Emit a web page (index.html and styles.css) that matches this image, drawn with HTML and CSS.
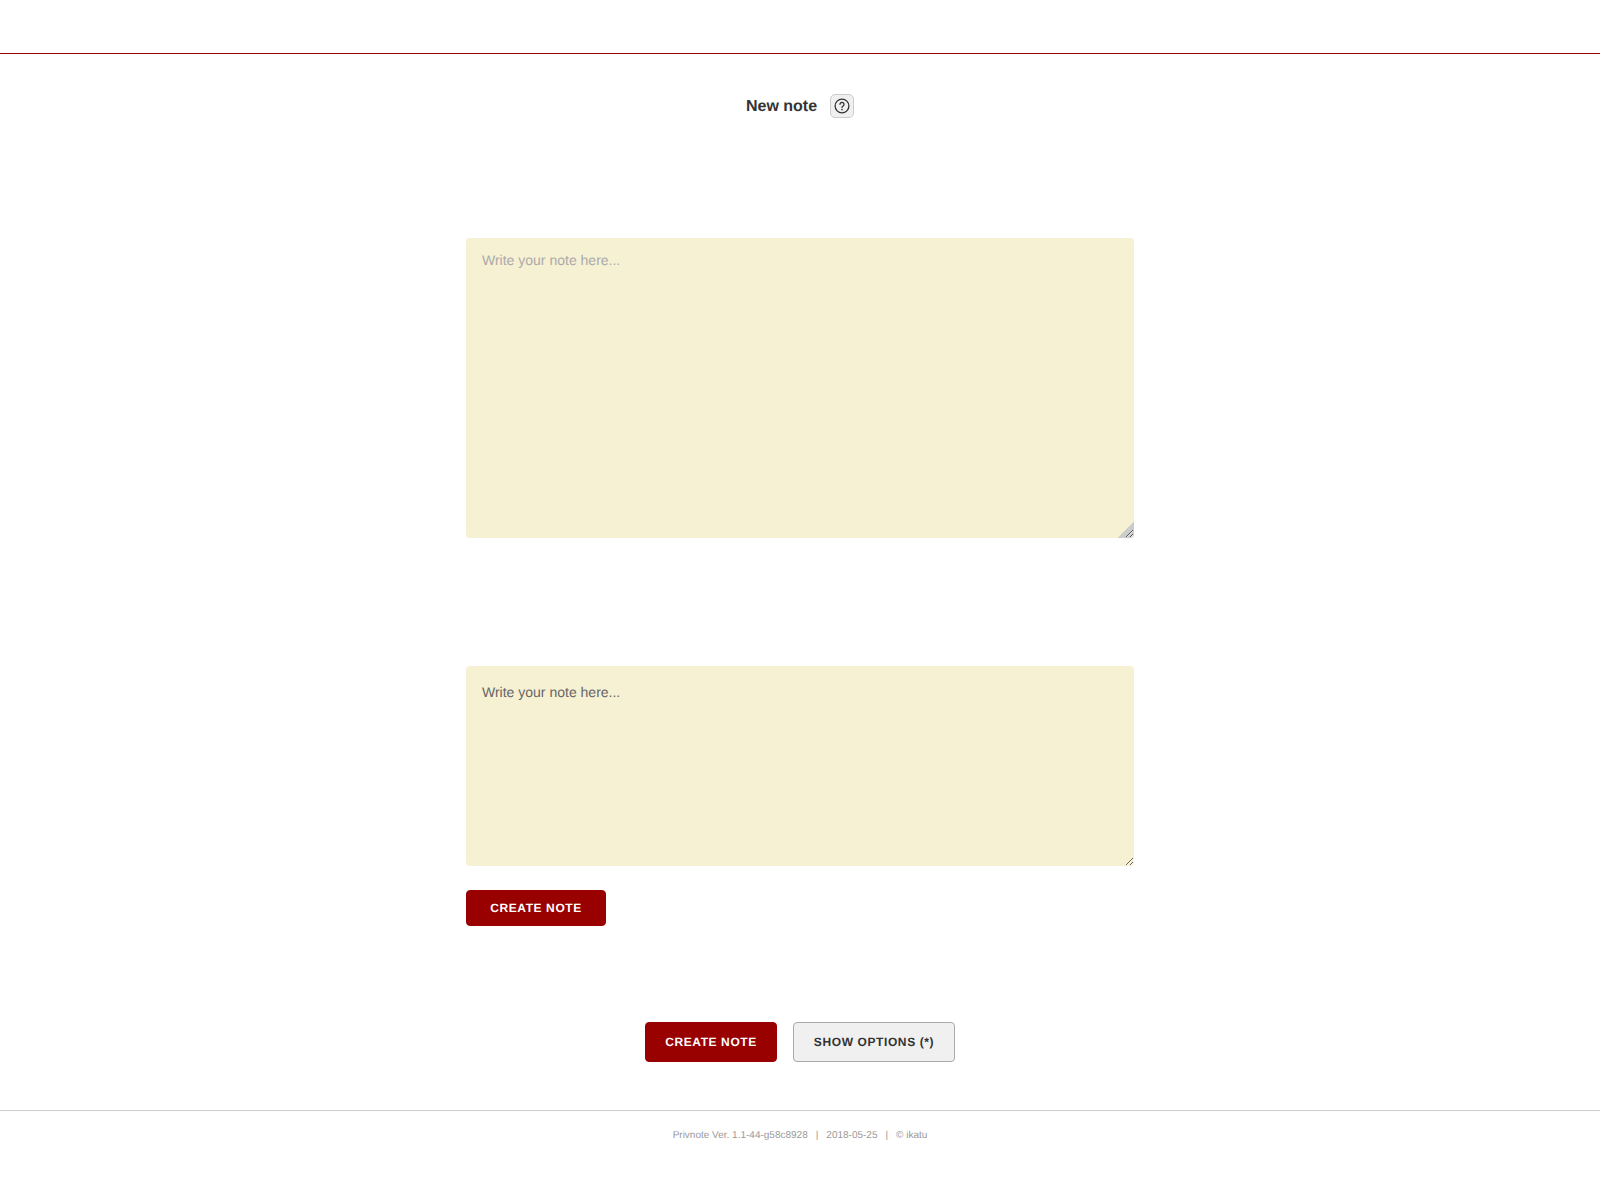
FILE: index.html
```html
<!DOCTYPE html>
<html lang="en">
<head>
<meta charset="utf-8">
<title>Privnote</title>
<link rel="stylesheet" href="styles.css">
</head>
<body>
<header class="topbar"></header>
<main class="content">
  <div class="title-row">
    <h1 class="title">New note</h1>
    <button class="help" type="button" aria-label="Help">
      <svg width="16" height="16" viewBox="0 0 16 16" fill="none" stroke="#333" stroke-width="1.3" stroke-linecap="round">
        <circle cx="8" cy="8" r="6.9"/>
        <path d="M6 6.3a2 2 0 1 1 3.1 1.7c-.7.45-1.1.8-1.1 1.5"/>
        <path d="M8 11.6v.1" stroke-width="1.5"/>
      </svg>
    </button>
  </div>
  <div class="column">
    <div class="note-wrap first">
      <textarea class="note tall" placeholder="Write your note here..."></textarea>
    </div>
    <div class="note-wrap second">
      <textarea class="note short">Write your note here...</textarea>
    </div>
    <button class="btn primary small" type="button">CREATE NOTE</button>
  </div>
  <div class="actions">
    <button class="btn primary large" type="button">CREATE NOTE</button>
    <button class="btn secondary large" type="button">SHOW OPTIONS (*)</button>
  </div>
</main>
<footer class="footer">Privnote Ver. 1.1-44-g58c8928<span class="sep">|</span>2018-05-25<span class="sep">|</span>© ikatu</footer>
</body>
</html>
```
FILE: styles.css
```css
* { box-sizing: border-box; }
html, body { margin: 0; padding: 0; background: #fff; }
body { font-family: "Liberation Sans", Arial, sans-serif; color: #333; height: 1200px; text-rendering: geometricPrecision; }
.topbar { height: 54px; border-bottom: 1px solid #990000; }
.content { display: flex; flex-direction: column; align-items: center; }
.title-row { display: flex; align-items: center; gap: 13px; height: 24px; margin-top: 40px; }
.title { margin: 0; padding-top: 2px; font-size: 16px; font-weight: 700; line-height: 24px; color: #333; }
.help { width: 24px; height: 24px; padding: 0; display: flex; align-items: center; justify-content: center; background: #f0f0f0; border: 1px solid #ccc; border-radius: 5px; }
.column { width: 668px; display: flex; flex-direction: column; align-items: flex-start; margin-top: 120px; }
.note-wrap { position: relative; width: 100%; display: flex; }
.second { margin-top: 128px; }
.note { display: block; width: 100%; margin: 0; padding: 12px 16px; border: 0; border-radius: 4px; outline: 0; background-color: #f7f1d4; font-family: "Liberation Sans", Arial, sans-serif; font-size: 14px; line-height: 20px; color: #666; resize: vertical; text-rendering: geometricPrecision; }
.note::placeholder { color: #aaa; opacity: 1; }
.tall { height: 300px; background-image: linear-gradient(135deg, transparent 50%, #ccc 50%); background-size: 16px 16px; background-position: right bottom; background-repeat: no-repeat; }
.short { height: 200px; padding-top: 16px; }
.btn { display: block; padding: 0; border-radius: 4px; font-family: "Liberation Sans", Arial, sans-serif; font-weight: 700; font-size: 12px; letter-spacing: 0.6px; text-align: center; text-rendering: geometricPrecision; }
.primary { background: #990000; border: 1px solid #990000; color: #fff; }
.secondary { background: #f0f0f0; border: 1px solid #aaa; color: #333; }
.small { width: 140px; height: 36px; margin-top: 24px; }
.large { height: 40px; }
.actions { display: flex; gap: 16px; margin-top: 96px; }
.actions .primary { width: 132px; }
.actions .secondary { width: 162px; }
.footer { margin-top: 48px; height: 90px; border-top: 1px solid #ccc; padding-top: 19px; text-align: center; font-size: 10px; line-height: 12px; color: #999; }
.sep { margin: 0 8px; }
```
